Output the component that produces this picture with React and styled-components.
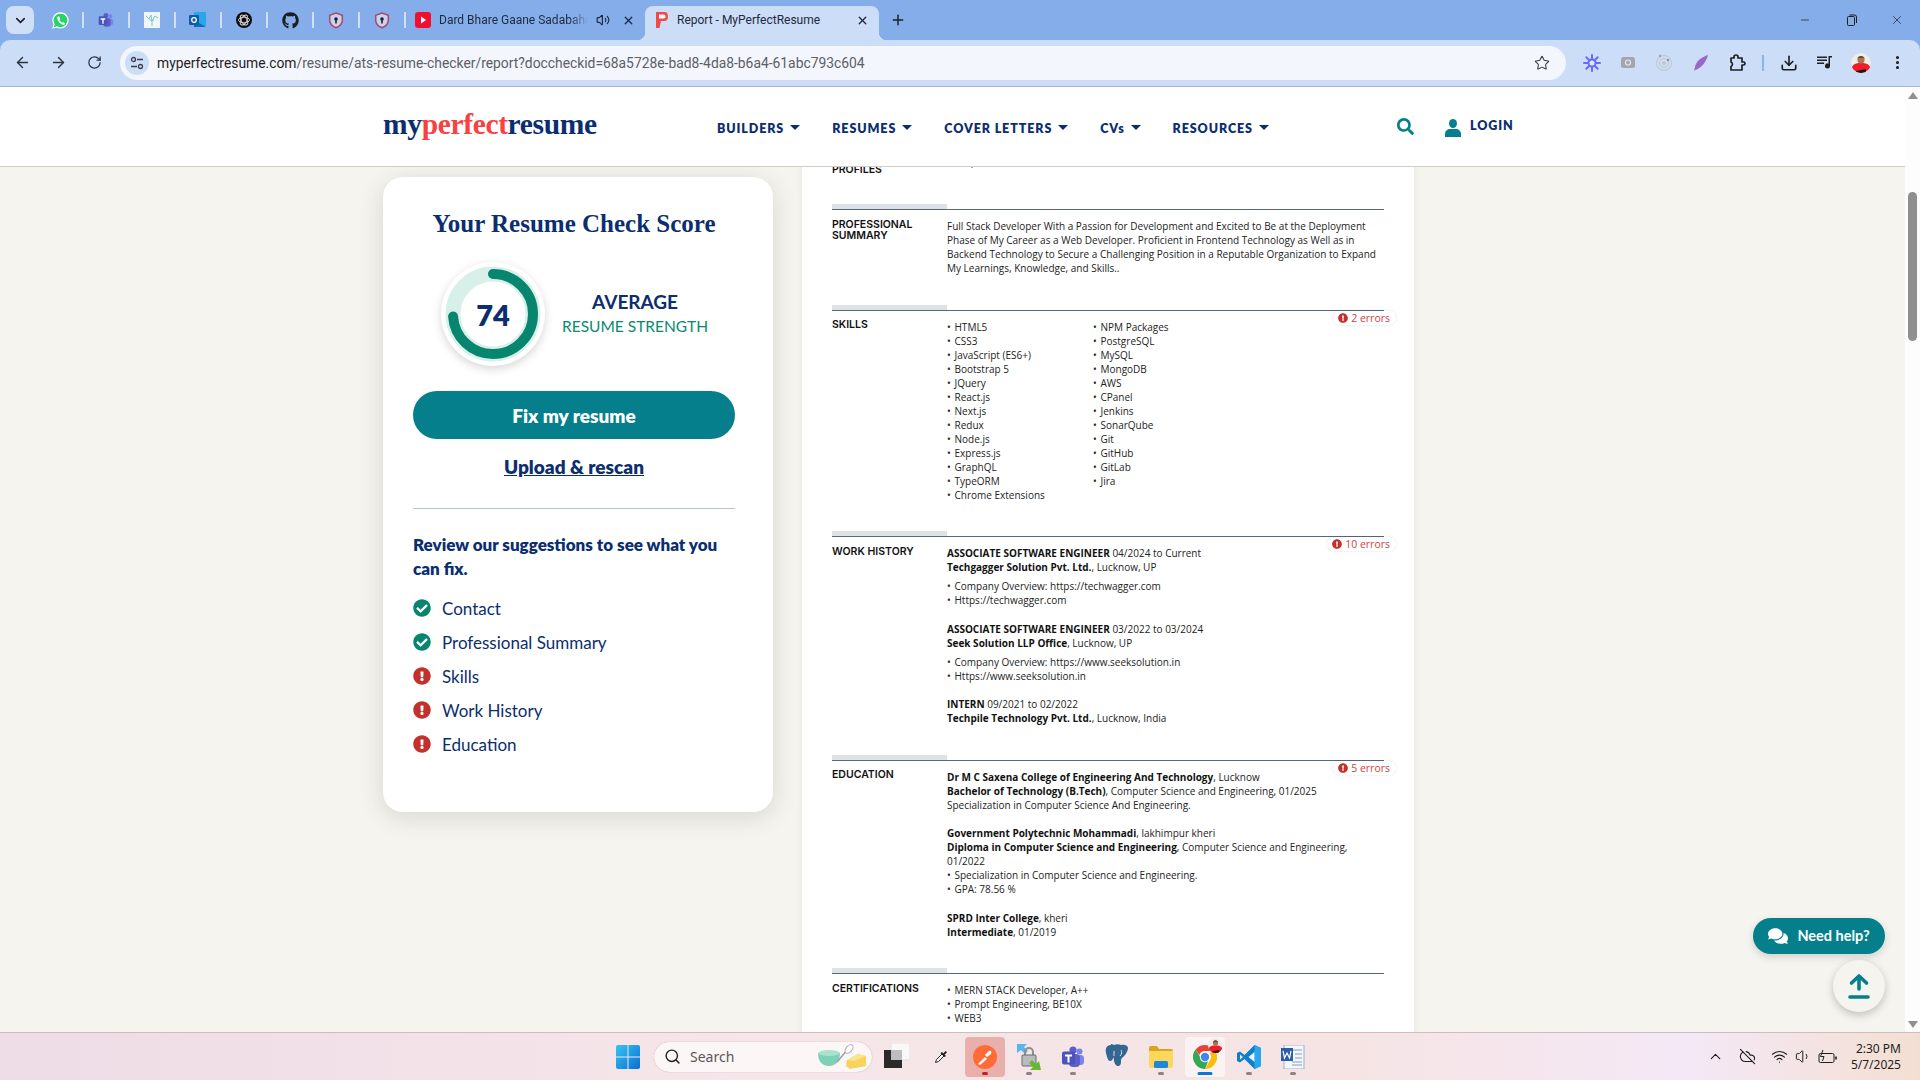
import React from 'react';
import styled, { createGlobalStyle } from 'styled-components';
import {
  ArrowLeft, ArrowRight, RotateCw, Star, MoreVertical, ChevronDown, ChevronUp,
  X, Plus, Minus, Volume2, CloudOff, Wifi, Volume1, Search, Download,
} from 'lucide-react';
import { FaCheckCircle, FaExclamationCircle, FaSearch, FaComments, FaGithub } from 'react-icons/fa';

const NAVY = '#0b2e6f';
const TEAL = '#047f8b';
const GREEN = '#08856e';
const RED = '#c4302b';

const GlobalStyle = createGlobalStyle`
  html, body { margin: 0; padding: 0; height: 100%; overflow: hidden; }
  * { box-sizing: border-box; }
  body { font-family: "Lato", "Liberation Sans", sans-serif; }
`;

const Screen = styled.div`
  width: 1920px;
  height: 1080px;
  display: flex;
  flex-direction: column;
  background: #84adea;
  overflow: hidden;
`;

/* ---------- browser chrome ---------- */
const TabStrip = styled.div`
  height: 40px;
  display: flex;
  align-items: flex-end;
  padding-left: 6px;
  flex: none;
`;

const TabMenu = styled.div`
  width: 28px;
  height: 28px;
  margin: 0 3px 6px 0;
  border-radius: 8px;
  background: #cfdff7;
  color: #1f1f1f;
  display: flex;
  align-items: center;
  justify-content: center;
`;

const PinnedTab = styled.div`
  width: 46px;
  height: 34px;
  padding-bottom: 6px;
  display: flex;
  align-items: center;
  justify-content: center;
  position: relative;
  &::after {
    content: '';
    position: absolute;
    right: -1px;
    top: 6px;
    width: 2px;
    height: 16px;
    background: #d0e0f8;
  }
`;

const Tab = styled.div`
  width: ${(p) => p.$width}px;
  height: 34px;
  display: flex;
  align-items: center;
  padding: 0 10px 6px;
  gap: 8px;
  position: relative;
  border-radius: 8px 8px 0 0;
  background: ${(p) => (p.$active ? '#cbddf7' : 'transparent')};
  color: #1f2a3c;
  font-family: "Roboto", "Noto Sans", sans-serif;
  font-size: 12px;
  ${(p) => p.$active && `
    &::before, &::after {
      content: '';
      position: absolute;
      bottom: 0;
      width: 8px;
      height: 8px;
    }
    &::before { left: -8px; background: radial-gradient(circle at 0 0, transparent 8px, #cbddf7 8.5px); }
    &::after { right: -8px; background: radial-gradient(circle at 100% 0, transparent 8px, #cbddf7 8.5px); }
  `}
`;

const TabTitle = styled.span`
  flex: 1;
  min-width: 0;
  white-space: nowrap;
  overflow: hidden;
  ${(p) => p.$fade && `
    -webkit-mask-image: linear-gradient(90deg, #000 88%, transparent);
    mask-image: linear-gradient(90deg, #000 88%, transparent);
  `}
`;

const NewTab = styled.div`
  width: 28px;
  height: 28px;
  margin: 0 0 6px 5px;
  display: flex;
  align-items: center;
  justify-content: center;
  color: #1f1f1f;
`;

const WindowControls = styled.div`
  margin-left: auto;
  height: 40px;
  display: flex;
`;

const WindowButton = styled.div`
  width: 46px;
  display: flex;
  align-items: center;
  justify-content: center;
  color: #1f1f1f;
`;

const Toolbar = styled.div`
  height: 47px;
  flex: none;
  display: flex;
  align-items: center;
  background: #cbddf7;
  border-radius: 10px 10px 0 0;
  border-bottom: 1px solid #a7b8d4;
  padding-bottom: 1px;
`;

const NavButton = styled.div`
  width: 36px;
  display: flex;
  justify-content: center;
  color: #2c3340;
  &:first-child { margin-left: 4px; }
`;

const Omnibox = styled.div`
  width: 1446px;
  height: 34px;
  margin-left: 8px;
  border-radius: 17px;
  background: #f3f6fc;
  display: flex;
  align-items: center;
  padding: 0 16px 0 5px;
  font-family: "Roboto", "Noto Sans", sans-serif;
  font-size: 13.85px;
  color: #1f1f1f;
`;

const SiteChip = styled.div`
  width: 24px;
  height: 24px;
  border-radius: 50%;
  background: #cbddf7;
  display: flex;
  align-items: center;
  justify-content: center;
  margin-right: 8px;
  flex: none;
`;

const UrlPath = styled.span`
  color: #5c6066;
`;

const ExtensionRow = styled.div`
  display: flex;
  align-items: center;
  margin-left: 8px;
`;

const ExtensionSlot = styled.div`
  width: 36.2px;
  display: flex;
  justify-content: center;
  align-items: center;
  color: #1f1f1f;
`;

const ToolbarDivider = styled.div`
  width: 2px;
  height: 16px;
  background: #8fb3e6;
  margin: 0 7px;
`;

/* ---------- page ---------- */
const Viewport = styled.div`
  flex: 1;
  min-height: 0;
  display: flex;
  position: relative;
  background: #fff;
`;

const PageColumn = styled.div`
  flex: 1;
  min-width: 0;
  display: flex;
  flex-direction: column;
  background: #f5f4ef;
`;

const SiteHeader = styled.header`
  height: 80px;
  flex: none;
  background: #fff;
  border-bottom: 1px solid #d2ccc4;
  display: flex;
  align-items: center;
  padding-left: 383px;
`;

const Logo = styled.div`
  width: 213px;
  font-family: "Liberation Serif", serif;
  font-weight: 700;
  font-size: 29.5px;
  letter-spacing: -0.35px;
  color: ${NAVY};
  margin-top: -4px;
  white-space: nowrap;
  span { color: #f9423f; }
`;

const NavMenu = styled.nav`
  display: flex;
  gap: 32px;
  margin: 3px 0 0 121px;
`;

const NavItem = styled.div`
  display: flex;
  align-items: center;
  gap: 6px;
  font-size: 12.5px;
  font-weight: 800;
  letter-spacing: 0.9px;
  color: ${NAVY};
  white-space: nowrap;
  &::after {
    content: '';
    width: 0;
    height: 0;
    border-left: 5px solid transparent;
    border-right: 5px solid transparent;
    border-top: 5px solid ${NAVY};
    margin-top: -2px;
  }
`;

const SearchButton = styled.div`
  margin-left: 128px;
  color: ${TEAL};
  display: flex;
`;

const LoginLink = styled.div`
  margin-left: 30px;
  display: flex;
  align-items: center;
  gap: 8px;
  font-size: 12.5px;
  font-weight: 800;
  letter-spacing: 0.9px;
  color: ${NAVY};
  svg { margin-top: 2px; }
  span { margin-top: -3px; }
`;

const PageBody = styled.div`
  flex: 1;
  min-height: 0;
  overflow: hidden;
  display: flex;
  align-items: flex-start;
  padding-left: 383px;
  gap: 29px;
`;

const ScoreCard = styled.aside`
  width: 390px;
  flex: none;
  margin-top: 10px;
  padding: 31px 38px 51px 30px;
  background: #fff;
  border-radius: 20px;
  box-shadow: 0 5px 24px rgba(70, 65, 45, 0.16);
`;

const CardTitle = styled.h2`
  margin: 0;
  text-align: center;
  font-family: "Liberation Serif", serif;
  font-weight: 700;
  font-size: 25px;
  line-height: 32px;
  color: ${NAVY};
`;

const ScoreRow = styled.div`
  display: flex;
  align-items: center;
  gap: 17px;
  margin: 22px 0 25px 28px;
`;

const Gauge = styled.div`
  width: 104px;
  height: 104px;
  border-radius: 50%;
  background: #fff;
  box-shadow: 0 3px 10px rgba(0, 0, 0, 0.16);
  display: grid;
  place-items: center;
  svg, span { grid-area: 1 / 1; }
`;

const GaugeValue = styled.span`
  font-size: 29px;
  font-weight: 800;
  color: ${NAVY};
`;

const ScoreLabel = styled.div`
  display: flex;
  flex-direction: column;
  align-items: center;
  white-space: nowrap;
`;

const ScoreWord = styled.div`
  font-size: 19px;
  line-height: 24px;
  font-weight: 700;
  color: ${NAVY};
`;

const ScoreCaption = styled.div`
  font-size: 15.5px;
  line-height: 24px;
  color: #0a8a6e;
`;

const FixButton = styled.button`
  display: block;
  width: 100%;
  height: 48px;
  border: none;
  border-radius: 24px;
  background: ${TEAL};
  color: #fff;
  font-family: inherit;
  font-size: 19px;
  font-weight: 800;
`;

const UploadLink = styled.a`
  display: block;
  margin-top: 16px;
  text-align: center;
  font-size: 19px;
  line-height: 24px;
  font-weight: 800;
  color: ${NAVY};
  text-decoration: underline;
`;

const CardDivider = styled.hr`
  margin: 29px 0 24px;
  border: none;
  border-top: 1px solid #b9c2d3;
`;

const ReviewText = styled.p`
  margin: 0 0 10px;
  font-size: 17px;
  line-height: 24px;
  font-weight: 800;
  color: ${NAVY};
`;

const CheckRow = styled.div`
  height: 34px;
  display: flex;
  align-items: center;
  gap: 11px;
  font-size: 17px;
  color: ${NAVY};
  svg { color: ${(p) => (p.$ok ? GREEN : RED)}; flex: none; }
`;

const Paper = styled.main`
  width: 612px;
  flex: none;
  margin-top: -14.5px;
  padding: 0 30px;
  background: #fff;
  box-shadow: 0 0 6px rgba(70, 65, 45, 0.08);
  font-family: "Open Sans", "Noto Sans", sans-serif;
  font-size: 10px;
  line-height: 14px;
  color: #222;
`;

const Section = styled.section`
  position: relative;
`;

const SectionRule = styled.div`
  height: 6px;
  border-bottom: 1px solid #56697b;
  background: linear-gradient(#dde2e6, #dde2e6) left top / 115px 5px no-repeat;
`;

const SectionBody = styled.div`
  display: grid;
  grid-template-columns: 115px 1fr;
  padding: ${(p) => (p.$bare ? 0 : 8.5)}px 0 29.5px;
`;

const SectionName = styled.h3`
  margin: 0;
  font-family: "Inter", "Lato", sans-serif;
  font-size: 10.5px;
  line-height: 11px;
  font-weight: 600;
  color: #111;
  padding-right: 20px;
`;

const SectionContent = styled.div`
  padding-top: 0.5px;
  min-width: 0;
`;

const ClippedValue = styled.div`
  padding-top: 3px;
`;

const ErrorBadge = styled.div`
  position: absolute;
  top: 6px;
  right: -12px;
  height: 14px;
  padding: 0 6px 0 5px;
  display: flex;
  align-items: center;
  gap: 3px;
  background: #fff;
  border-radius: 7px;
  box-shadow: 0 0 3px rgba(0, 0, 0, 0.12);
  color: #c9453f;
  font-size: 10.5px;
  svg { color: ${RED}; }
`;

const SkillColumns = styled.div`
  display: grid;
  grid-template-columns: 146px 1fr;
`;

const BulletLine = styled.div`
  padding-left: 7.5px;
  position: relative;
  &::before {
    content: '•';
    position: absolute;
    left: 0;
  }
`;

const Entry = styled.div`
  & + & { margin-top: 14.6px; }
`;

const EntryBullets = styled.div`
  margin-top: ${(p) => p.$gap || 0}px;
`;

const Strong = styled.b`
  font-weight: 700;
  color: #111;
`;

const Scrollbar = styled.div`
  width: 15px;
  flex: none;
  background: #fdfdfd;
  display: flex;
  flex-direction: column;
  align-items: center;
  padding: 5px 0 4px;
`;

const ScrollArrow = styled.div`
  width: 0;
  height: 0;
  border-left: 5px solid transparent;
  border-right: 5px solid transparent;
  ${(p) => (p.$down
    ? 'border-top: 7px solid #8f8f8f; margin-top: auto;'
    : 'border-bottom: 7px solid #8f8f8f;')}
`;

const ScrollThumb = styled.div`
  width: 9px;
  height: 149px;
  margin-top: 93px;
  border-radius: 5px;
  background: #8f8f8f;
`;

const HelpButton = styled.div`
  position: absolute;
  right: 35px;
  top: 831px;
  width: 132px;
  height: 36px;
  padding-bottom: 1px;
  border-radius: 18px;
  background: ${TEAL};
  color: #fff;
  display: flex;
  align-items: center;
  justify-content: center;
  gap: 9px;
  font-size: 14.5px;
  font-weight: 700;
  box-shadow: 0 3px 8px rgba(0, 0, 0, 0.15);
`;

const TopButton = styled.div`
  position: absolute;
  right: 35px;
  top: 873px;
  width: 52px;
  height: 52px;
  border-radius: 50%;
  background: #f5f4ef;
  box-shadow: 0 3px 8px rgba(0, 0, 0, 0.22);
  display: flex;
  align-items: center;
  justify-content: center;
`;

/* ---------- taskbar ---------- */
const Taskbar = styled.footer`
  height: 48px;
  flex: none;
  display: flex;
  align-items: center;
  padding-left: 606px;
  border-top: 1px solid #c9bfc0;
  background: linear-gradient(90deg, #eedce6 0%, #f6e6e9 40%, #f6e4e4 70%, #f4e8f6 88%, #f3dfd2 100%);
`;

const StartButton = styled.div`
  width: 44px;
  display: flex;
  justify-content: center;
`;

const SearchPill = styled.div`
  width: 218px;
  height: 30px;
  margin: 0 3px 0 4px;
  border-radius: 15px;
  background: #fcf6f6;
  box-shadow: 0 0 1px rgba(0, 0, 0, 0.35);
  display: flex;
  align-items: center;
  gap: 9px;
  padding: 0 4px 0 10px;
  font-family: "Noto Sans", "Open Sans", sans-serif;
  font-size: 14px;
  color: #5a5658;
  svg:last-child { margin-left: auto; }
`;

const AppSlot = styled.div`
  width: 44px;
  height: 40px;
  padding: 0 2px;
`;

const AppButton = styled.div`
  height: 40px;
  border-radius: 4px;
  background: ${(p) => p.$bg || 'transparent'};
  display: flex;
  align-items: center;
  justify-content: center;
  position: relative;
  &::after {
    content: '';
    display: ${(p) => (p.$dot ? 'block' : 'none')};
    position: absolute;
    bottom: 2px;
    left: 50%;
    transform: translateX(-50%);
    width: ${(p) => (p.$dot === 'wide' ? 15 : 6)}px;
    height: 3px;
    border-radius: 2px;
    background: ${(p) => p.$dotColor || '#8a8486'};
  }
`;

const ChromeAvatar = styled.div`
  position: absolute;
  top: 1px;
  right: 2px;
  display: flex;
`;

const Tray = styled.div`
  margin-left: auto;
  display: flex;
  align-items: center;
  padding-right: 19px;
  color: #1f1f1f;
`;

const TraySlot = styled.div`
  width: 24px;
  display: flex;
  justify-content: center;
  margin-right: ${(p) => p.$gap || 0}px;
`;

const Clock = styled.div`
  margin-left: 11px;
  text-align: right;
  font-family: "Noto Sans", "Open Sans", sans-serif;
  font-size: 12px;
  line-height: 16px;
`;

/* ---------- small drawings ---------- */
const WhatsappIcon = () => (
  <svg width="17" height="17" viewBox="0 0 17 17">
    <path d="M8.500.8a7.500 7.500 0 0 0-6.400 11.400L1 16l3.900-1.100A7.500 7.500 0 1 0 8.500.8z" fill="#25d366" stroke="#fff" strokeWidth="1.200" />
    <path d="M6 4.500c-.9.600-1.100 2 0 4s3 3.800 5 4.200c1 .2 1.900-.5 2.200-1.300l-2-1.400-1 .8c-1-.4-2.300-1.800-2.800-2.800l.8-1-1-2.500z" fill="#fff" />
  </svg>
);

const TeamsIcon = ({ size = 16 }) => (
  <svg width={size} height={size} viewBox="0 0 24 24">
    <circle cx="18.5" cy="6.5" r="3" fill="#7b83eb" />
    <rect x="14" y="10" width="9" height="10" rx="3.5" fill="#7b83eb" />
    <circle cx="12" cy="5" r="3.6" fill="#5b5fc7" />
    <rect x="8" y="9" width="11" height="13" rx="4" fill="#5b5fc7" />
    <rect x="1" y="6.5" width="13" height="13" rx="2" fill="#4b53bc" />
    <path d="M4 9.5h7v2H8.5v6h-2v-6H4z" fill="#fff" />
  </svg>
);

const ShieldIcon = () => (
  <svg width="16" height="17" viewBox="0 0 16 17">
    <path d="M8 1l6.300 2.200v5c0 3.600-2.700 6.200-6.300 7.600C4.400 14.400 1.700 11.800 1.700 8.200v-5z" fill="#c9d3ea" stroke="#a8496e" strokeWidth="1.500" />
    <circle cx="8" cy="7" r="1.800" fill="#2b1d33" />
    <rect x="7.200" y="7.500" width="1.600" height="4" fill="#2b1d33" />
  </svg>
);

const OutlookIcon = () => (
  <svg width="18" height="18" viewBox="0 0 18 18">
    <path d="M5 1h12v14H5z" fill="#28a8ea" />
    <path d="M5 9l12 7H5z" fill="#0f6cbd" />
    <rect x="0" y="4" width="10" height="10" rx="1" fill="#0f5ca8" />
    <circle cx="5" cy="9" r="2.300" fill="none" stroke="#fff" strokeWidth="1.300" />
  </svg>
);

const ImageFavicon = () => (
  <svg width="16" height="16" viewBox="0 0 16 16">
    <rect width="16" height="16" fill="#f1f6f7" />
    <path d="M2 4l3 3 2-4 1 6 3-5 3 2M8 9v5M5 6l2 3 3-1" fill="none" stroke="#7cc5d2" strokeWidth="1" />
  </svg>
);

const OpenAiIcon = () => (
  <svg width="16" height="16" viewBox="0 0 16 16">
    <circle cx="8" cy="8" r="8" fill="#0d0d0d" />
    <g fill="none" stroke="#d8d8d8" strokeWidth="0.900">
      <ellipse cx="8" cy="8" rx="5.500" ry="2.800" />
      <ellipse cx="8" cy="8" rx="5.500" ry="2.800" transform="rotate(60 8 8)" />
      <ellipse cx="8" cy="8" rx="5.500" ry="2.800" transform="rotate(120 8 8)" />
    </g>
    <circle cx="8" cy="8" r="1.500" fill="#0d0d0d" />
  </svg>
);

const YoutubeIcon = () => (
  <svg width="16" height="16" viewBox="0 0 16 16">
    <rect width="16" height="16" rx="3" fill="#f00f2f" />
    <path d="M6 4.500l5 3.500-5 3.500z" fill="#fff" />
  </svg>
);

const ResumeFavicon = () => (
  <svg width="14" height="18" viewBox="0 0 14 18">
    <path d="M1 1h8.500C12 1 13 3 13 5.500S12 10 9.500 10H6l-1.500 7H1z" fill="#f04a48" />
    <path d="M4 3.500h4.500C10 3.500 10.500 4.500 10.500 5.500S10 7.500 8.500 7.500H4z" fill="#fff" />
  </svg>
);

const TuneIcon = () => (
  <svg width="14" height="14" viewBox="0 0 14 14" fill="none" stroke="#3a3f47" strokeWidth="1.300">
    <circle cx="3.500" cy="3.500" r="2" />
    <path d="M7 3.500h6M1 10.500h6" />
    <circle cx="10.500" cy="10.500" r="2" />
  </svg>
);

const BurstIcon = () => (
  <svg width="18" height="18" viewBox="0 0 18 18" stroke="#6a6cf5" strokeWidth="2" strokeLinecap="round">
    <path d="M9 1v16M1 9h16M3.300 3.300l11.400 11.400M14.700 3.300L3.300 14.700" />
    <circle cx="9" cy="9" r="3.500" fill="#dfe4ff" />
  </svg>
);

const CameraChip = () => (
  <svg width="14" height="11" viewBox="0 0 14 11">
    <rect width="14" height="11" rx="2.500" fill="#a3a7ad" />
    <circle cx="7" cy="5.500" r="2.500" fill="none" stroke="#e6e9ee" strokeWidth="1.200" />
  </svg>
);

const RadarIcon = () => (
  <svg width="18" height="18" viewBox="0 0 18 18" fill="none" stroke="#c2c8d0">
    <circle cx="9" cy="9" r="7.500" />
    <circle cx="9" cy="9" r="4.500" />
    <circle cx="9" cy="9" r="1.500" fill="#d9c9a8" />
    <circle cx="13" cy="6" r="1.200" fill="#8b8f96" stroke="none" />
    <circle cx="5" cy="2" r="1.200" fill="#9a9ea5" stroke="none" />
  </svg>
);

const FeatherIcon = () => (
  <svg width="16" height="18" viewBox="0 0 16 18">
    <path d="M15 1C9 3 3 7 2 13l-1 4 1-1C7 15 13 9 15 1z" fill="#9a66c8" />
  </svg>
);

const PuzzleIcon = () => (
  <svg width="18" height="18" viewBox="0 0 18 18" fill="none" stroke="#1f1f1f" strokeWidth="1.700" strokeLinejoin="round">
    <path d="M3 4h3V3a2 2 0 0 1 4 0v1h4v4h1.500a1.500 1.500 0 0 1 0 3H14v5H3v-3.500a2.500 2.500 0 0 0 0-4.500z" />
  </svg>
);

const MediaIcon = () => (
  <svg width="16" height="15" viewBox="0 0 16 15" fill="#1f1f1f">
    <rect x="0" y="1.500" width="10" height="1.500" />
    <rect x="0" y="4.500" width="10" height="1.500" />
    <rect x="0" y="7.500" width="7" height="1.500" />
    <path d="M11.500 1h3.500v1.600h-2V11a2.500 2.500 0 1 1-1.500-2.300z" />
  </svg>
);

const AvatarIcon = ({ size = 20 }) => (
  <svg width={size} height={size} viewBox="0 0 20 20">
    <clipPath id={`avatar-${size}`}><circle cx="10" cy="10" r="10" /></clipPath>
    <g clipPath={`url(#avatar-${size})`}>
      <rect width="20" height="20" fill="#f2ece6" />
      <path d="M0 20c0-8 3-10 10-10s10 2 10 10z" fill="#f01c28" />
      <circle cx="10" cy="6.800" r="3.600" fill="#a9744f" />
      <path d="M6.500 5.500c0-3 7-3 7 0l-1-1h-5z" fill="#2a2320" />
      <path d="M5 18l10-2v4H5z" fill="#241515" />
    </g>
  </svg>
);

const UserGlyph = () => (
  <svg width="18" height="18" viewBox="0 0 18 18" fill={TEAL}>
    <ellipse cx="9" cy="4.500" rx="4" ry="4.500" />
    <path d="M1 18v-3c0-3 2.500-5 5-5h6c2.500 0 5 2 5 5v3z" />
  </svg>
);

const UpIcon = () => (
  <svg width="22" height="26" viewBox="0 0 22 26" fill="none" stroke={TEAL} strokeWidth="3.600" strokeLinecap="round" strokeLinejoin="round">
    <path d="M11 16V3M3.500 10L11 3l7.500 7" />
    <path d="M2 24h18" />
  </svg>
);

const WindowsLogo = () => (
  <svg width="24" height="24" viewBox="0 0 24 24">
    <defs>
      <linearGradient id="win" x1="0" y1="0" x2="1" y2="1">
        <stop offset="0" stopColor="#35c4f4" />
        <stop offset="1" stopColor="#0a6fd0" />
      </linearGradient>
    </defs>
    <path d="M2 0h9.500v11.500H0V2a2 2 0 0 1 2-2zM12.500 0H22a2 2 0 0 1 2 2v9.500H12.500zM0 12.500h11.500V24H2a2 2 0 0 1-2-2zM12.500 12.500H24V22a2 2 0 0 1-2 2h-9.500z" fill="url(#win)" />
  </svg>
);

const DoodleIcon = () => (
  <svg width="52" height="26" viewBox="0 0 52 26">
    <path d="M2 9h22c0 8-4 13-11 13S2 17 2 9z" fill="#7ed0b6" />
    <ellipse cx="13" cy="9" rx="11" ry="3" fill="#a9e3d0" />
    <path d="M21 18L32 5" stroke="#9aa0a6" strokeWidth="1.500" />
    <ellipse cx="33" cy="5" rx="3" ry="5" fill="#fff" stroke="#a8adb2" transform="rotate(40 33 5)" />
    <path d="M31 16l11-6 8 2v10l-16 3-4-3z" fill="#f7d35c" />
    <path d="M31 16l11-6 8 2-12 5z" fill="#fbe48d" />
  </svg>
);

const StackSquares = () => (
  <svg width="26" height="28" viewBox="0 0 26 28">
    <rect x="7" y="0" width="19" height="17" fill="#f8f8f8" />
    <rect x="7" y="0" width="19" height="17" fill="none" stroke="#e3dfe0" />
    <rect x="0" y="7" width="18" height="18" fill="#2a2a2a" />
    <rect x="7" y="7" width="11" height="10" fill="#bdbdbd" />
  </svg>
);

const DropperIcon = () => (
  <svg width="14" height="15" viewBox="0 0 14 15">
    <path d="M1.500 13.500l1-3L8 5l2 2-5.500 5.500z" fill="#f4f4f4" stroke="#2a2a2a" />
    <path d="M8 3l1.500 1.500L11 2.500c1-.8 2.300.6 1.500 1.500L10.500 5.500 12 7l-1.500 1L6.500 4z" fill="#1c1c1c" />
  </svg>
);

const PostmanIcon = () => (
  <svg width="24" height="24" viewBox="0 0 24 24">
    <circle cx="12" cy="12" r="12" fill="#ff6c37" />
    <path d="M5 19l7-7 2 2-7 6zM12 10l4-4c2-1 3 1 2 3l-4 3z" fill="#fff" />
  </svg>
);

const LockArrowsIcon = () => (
  <svg width="26" height="28" viewBox="0 0 26 28">
    <path d="M1 1h10L8 4l4 4-3 3-4-4-4 3z" fill="#58b5ee" />
    <path d="M9 12V9a4 4 0 0 1 8 0v3" fill="none" stroke="#8d8d8d" strokeWidth="2" />
    <rect x="6" y="12" width="14" height="11" rx="1" fill="#b9bcbf" stroke="#6a6a6a" />
    <path d="M25 27H14l3-3-4-4 3-3 4 4 3-3z" fill="#66b82e" />
  </svg>
);

const PostgresIcon = () => (
  <svg width="24" height="26" viewBox="0 0 24 26" fill="#336791">
    <path d="M6 1c-4 0-6 3-5 8 1 4 2 8 4 8s3-2 3.500-4c.5 3 .5 8 4 9 2 .5 3.500-1 3.500-4 0-2 0-3 1-4 3-2 6-7 6-10 0-2-3-4-7-3-2-1-5-1-7 0-1-.5-2-1-3-1z" />
    <path d="M9 7v5M16 6c1 2 1 4-1 6" stroke="#cfe0ee" fill="none" />
  </svg>
);

const FolderIcon = () => (
  <svg width="24" height="22" viewBox="0 0 24 22">
    <path d="M0 2a2 2 0 0 1 2-2h6l2 3h12a2 2 0 0 1 2 2v3H0z" fill="#d9a520" />
    <path d="M0 5h24v15a2 2 0 0 1-2 2H2a2 2 0 0 1-2-2z" fill="#fbd75b" />
    <rect x="5" y="15" width="14" height="7" rx="1.500" fill="#1c88d6" />
  </svg>
);

const ChromeIcon = () => (
  <svg width="24" height="24" viewBox="0 0 24 24">
    <path d="M12 0a12 12 0 0 1 10.400 6H12a6 6 0 0 0-5.700 4L2.800 4.300A12 12 0 0 1 12 0z" fill="#ea4335" />
    <path d="M22.400 6A12 12 0 0 1 12 24l5.200-9A6 6 0 0 0 16.500 8z" fill="#fbbc04" />
    <path d="M12 24A12 12 0 0 1 2.800 4.300L7.700 13a6 6 0 0 0 7.500 3z" fill="#34a853" />
    <circle cx="12" cy="12" r="5.200" fill="#fff" />
    <circle cx="12" cy="12" r="4.200" fill="#4285f4" />
  </svg>
);

const VsCodeIcon = () => (
  <svg width="24" height="24" viewBox="0 0 24 24">
    <path d="M17.500 0L24 3v18l-6.500 3-10-10-4.500 3.500L0 16V8l3-1.500L7.500 10z" fill="#0f7ecb" />
    <path d="M17.500 0L24 3v18l-6.500 3z" fill="#27a7ee" />
    <path d="M17.500 7l-6 5 6 5z" fill="#eaf3fb" />
    <path d="M3 9.500L6 12l-3 2.500z" fill="#eaf3fb" />
  </svg>
);

const WordIcon = () => (
  <svg width="24" height="24" viewBox="0 0 24 24">
    <rect x="3" y="0" width="20" height="24" fill="#f4f7fb" stroke="#9cb1cf" />
    <path d="M11 5h10M14 9h7M14 13h7M11 17h10M11 20h10" stroke="#7f9dc7" />
    <rect x="0" y="3" width="12" height="13" fill="#2b5eaa" />
    <path d="M2 6l1.500 7L6 8l2.500 5L10 6" fill="none" stroke="#fff" strokeWidth="1.200" />
  </svg>
);

const BatteryIcon = () => (
  <svg width="20" height="16" viewBox="0 0 20 16" fill="none" stroke="#1f1f1f" strokeWidth="1">
    <rect x="1" y="4.500" width="15" height="9" rx="1.500" />
    <path d="M18 7.500v3" strokeWidth="1.600" />
    <path d="M5 1L2.500 7.500H6L4.500 12" fill="none" />
  </svg>
);

/* ---------- data ---------- */
const pinnedTabs = [
  <WhatsappIcon key="wa" />,
  <TeamsIcon key="teams" />,
  <ImageFavicon key="img" />,
  <OutlookIcon key="out" />,
  <OpenAiIcon key="ai" />,
  <FaGithub key="gh" size={17} color="#1b1f23" />,
  <ShieldIcon key="s1" />,
  <ShieldIcon key="s2" />,
];

const navItems = ['BUILDERS', 'RESUMES', 'COVER LETTERS', 'CVs', 'RESOURCES'];

const checks = [
  ['Contact', true],
  ['Professional Summary', true],
  ['Skills', false],
  ['Work History', false],
  ['Education', false],
];

const skillsLeft = ['HTML5', 'CSS3', 'JavaScript (ES6+)', 'Bootstrap 5', 'JQuery', 'React.js', 'Next.js', 'Redux', 'Node.js', 'Express.js', 'GraphQL', 'TypeORM', 'Chrome Extensions'];
const skillsRight = ['NPM Packages', 'PostgreSQL', 'MySQL', 'MongoDB', 'AWS', 'CPanel', 'Jenkins', 'SonarQube', 'Git', 'GitHub', 'GitLab', 'Jira'];

const taskApps = [
  { icon: <StackSquares /> },
  { icon: <DropperIcon /> },
  { icon: <PostmanIcon />, bg: '#e9b0ab', dot: true, dotColor: '#c8201c' },
  { icon: <LockArrowsIcon />, dot: true },
  { icon: <TeamsIcon size={24} />, dot: true },
  { icon: <PostgresIcon /> },
  { icon: <FolderIcon />, dot: true },
  { icon: <ChromeIcon />, bg: '#fbf3f3', dot: 'wide', dotColor: '#0a78d4', avatar: true },
  { icon: <VsCodeIcon />, dot: true },
  { icon: <WordIcon />, dot: true },
];

const Badge = ({ count }) => (
  <ErrorBadge>
    <FaExclamationCircle size={10} />
    {count} errors
  </ErrorBadge>
);

const ResumeSection = ({ name, bare, errors, children }) => (
  <Section>
    {!bare && <SectionRule />}
    {errors && <Badge count={errors} />}
    <SectionBody $bare={bare}>
      <SectionName>{name}</SectionName>
      <SectionContent>{children}</SectionContent>
    </SectionBody>
  </Section>
);

const App = () => {
  return (
    <Screen>
      <GlobalStyle />
      <TabStrip>
        <TabMenu><ChevronDown size={15} strokeWidth={2.5} /></TabMenu>
        {pinnedTabs.map((icon, i) => <PinnedTab key={i}>{icon}</PinnedTab>)}
        <Tab $width={240}>
          <YoutubeIcon />
          <TabTitle $fade>Dard Bhare Gaane Sadabahar Hindi Songs</TabTitle>
          <Volume2 size={14} strokeWidth={2} />
          <X size={13} strokeWidth={2.5} style={{ marginLeft: 4 }} />
        </Tab>
        <Tab $width={234} $active>
          <ResumeFavicon />
          <TabTitle>Report - MyPerfectResume</TabTitle>
          <X size={13} strokeWidth={2.5} />
        </Tab>
        <NewTab><Plus size={16} strokeWidth={2.2} /></NewTab>
        <WindowControls>
          <WindowButton><Minus size={12} strokeWidth={1.5} /></WindowButton>
          <WindowButton>
            <svg width="11" height="12" viewBox="0 0 11 12" fill="none" stroke="#1f1f1f">
              <rect x="1.500" y="2.500" width="7" height="9" rx="1" />
              <path d="M3.500 1h5a2 2 0 0 1 2 2v6" />
            </svg>
          </WindowButton>
          <WindowButton><X size={14} strokeWidth={1.2} /></WindowButton>
        </WindowControls>
      </TabStrip>

      <Toolbar>
        <NavButton><ArrowLeft size={17} strokeWidth={2} /></NavButton>
        <NavButton><ArrowRight size={17} strokeWidth={2} /></NavButton>
        <NavButton><RotateCw size={15} strokeWidth={2} /></NavButton>
        <Omnibox>
          <SiteChip><TuneIcon /></SiteChip>
          <span>myperfectresume.com<UrlPath>/resume/ats-resume-checker/report?doccheckid=68a5728e-bad8-4da8-b6a4-61abc793c604</UrlPath></span>
          <Star size={16} strokeWidth={1.6} color="#3a3f47" style={{ marginLeft: 'auto' }} />
        </Omnibox>
        <ExtensionRow>
          <ExtensionSlot><BurstIcon /></ExtensionSlot>
          <ExtensionSlot><CameraChip /></ExtensionSlot>
          <ExtensionSlot><RadarIcon /></ExtensionSlot>
          <ExtensionSlot><FeatherIcon /></ExtensionSlot>
          <ExtensionSlot><PuzzleIcon /></ExtensionSlot>
          <ToolbarDivider />
          <ExtensionSlot><Download size={18} strokeWidth={2.2} /></ExtensionSlot>
          <ExtensionSlot><MediaIcon /></ExtensionSlot>
          <ExtensionSlot><AvatarIcon /></ExtensionSlot>
          <ExtensionSlot><MoreVertical size={17} strokeWidth={2.4} /></ExtensionSlot>
        </ExtensionRow>
      </Toolbar>

      <Viewport>
        <PageColumn>
          <SiteHeader>
            <Logo>my<span>perfect</span>resume</Logo>
            <NavMenu>
              {navItems.map((item) => <NavItem key={item}>{item}</NavItem>)}
            </NavMenu>
            <SearchButton><FaSearch size={17} /></SearchButton>
            <LoginLink><UserGlyph /><span>LOGIN</span></LoginLink>
          </SiteHeader>

          <PageBody>
            <ScoreCard>
              <CardTitle>Your Resume Check Score</CardTitle>
              <ScoreRow>
                <Gauge>
                  <svg width="96" height="96" viewBox="0 0 96 96">
                    <circle cx="48" cy="48" r="40" fill="none" stroke="#d8f0ea" strokeWidth="15" />
                    <circle
                      cx="48"
                      cy="48"
                      r="40"
                      fill="none"
                      stroke={GREEN}
                      strokeWidth="10"
                      strokeLinecap="round"
                      pathLength="100"
                      strokeDasharray="74 100"
                      transform="rotate(-90 48 48)"
                    />
                  </svg>
                  <GaugeValue>74</GaugeValue>
                </Gauge>
                <ScoreLabel>
                  <ScoreWord>AVERAGE</ScoreWord>
                  <ScoreCaption>RESUME STRENGTH</ScoreCaption>
                </ScoreLabel>
              </ScoreRow>
              <FixButton>Fix my resume</FixButton>
              <UploadLink>Upload &amp; rescan</UploadLink>
              <CardDivider />
              <ReviewText>Review our suggestions to see what you can fix.</ReviewText>
              {checks.map(([label, ok]) => (
                <CheckRow key={label} $ok={ok}>
                  {ok ? <FaCheckCircle size={18} /> : <FaExclamationCircle size={18} />}
                  {label}
                </CheckRow>
              ))}
            </ScoreCard>

            <Paper>
              <ResumeSection bare name="PORTFOLIOS, PROFILES">
                <ClippedValue>Links,</ClippedValue>
              </ResumeSection>
              <ResumeSection name="PROFESSIONAL SUMMARY">
                Full Stack Developer With a Passion for Development and Excited to Be at the Deployment Phase of My Career as a Web Developer. Proficient in Frontend Technology as Well as in Backend Technology to Secure a Challenging Position in a Reputable Organization to Expand My Learnings, Knowledge, and Skills..
              </ResumeSection>
              <ResumeSection name="SKILLS" errors={2}>
                <SkillColumns>
                  <div>{skillsLeft.map((s) => <BulletLine key={s}>{s}</BulletLine>)}</div>
                  <div>{skillsRight.map((s) => <BulletLine key={s}>{s}</BulletLine>)}</div>
                </SkillColumns>
              </ResumeSection>
              <ResumeSection name="WORK HISTORY" errors={10}>
                <Entry>
                  <div><Strong>ASSOCIATE SOFTWARE ENGINEER</Strong> 04/2024 to Current</div>
                  <div><Strong>Techgagger Solution Pvt. Ltd.</Strong>, Lucknow, UP</div>
                  <EntryBullets $gap={5}>
                    <BulletLine>Company Overview: https://techwagger.com</BulletLine>
                    <BulletLine>Https://techwagger.com</BulletLine>
                  </EntryBullets>
                </Entry>
                <Entry>
                  <div><Strong>ASSOCIATE SOFTWARE ENGINEER</Strong> 03/2022 to 03/2024</div>
                  <div><Strong>Seek Solution LLP Office</Strong>, Lucknow, UP</div>
                  <EntryBullets $gap={5}>
                    <BulletLine>Company Overview: https://www.seeksolution.in</BulletLine>
                    <BulletLine>Https://www.seeksolution.in</BulletLine>
                  </EntryBullets>
                </Entry>
                <Entry>
                  <div><Strong>INTERN</Strong> 09/2021 to 02/2022</div>
                  <div><Strong>Techpile Technology Pvt. Ltd.</Strong>, Lucknow, India</div>
                </Entry>
              </ResumeSection>
              <ResumeSection name="EDUCATION" errors={5}>
                <Entry>
                  <div><Strong>Dr M C Saxena College of Engineering And Technology</Strong>, Lucknow</div>
                  <div><Strong>Bachelor of Technology (B.Tech)</Strong>, Computer Science and Engineering, 01/2025</div>
                  <div>Specialization in Computer Science And Engineering.</div>
                </Entry>
                <Entry>
                  <div><Strong>Government Polytechnic Mohammadi</Strong>, lakhimpur kheri</div>
                  <div><Strong>Diploma in Computer Science and Engineering</Strong>, Computer Science and Engineering, 01/2022</div>
                  <BulletLine>Specialization in Computer Science and Engineering.</BulletLine>
                  <BulletLine>GPA: 78.56 %</BulletLine>
                </Entry>
                <Entry>
                  <div><Strong>SPRD Inter College</Strong>, kheri</div>
                  <div><Strong>Intermediate</Strong>, 01/2019</div>
                </Entry>
              </ResumeSection>
              <ResumeSection name="CERTIFICATIONS">
                <BulletLine>MERN STACK Developer, A++</BulletLine>
                <BulletLine>Prompt Engineering, BE10X</BulletLine>
                <BulletLine>WEB3</BulletLine>
              </ResumeSection>
            </Paper>
          </PageBody>
        </PageColumn>

        <Scrollbar>
          <ScrollArrow />
          <ScrollThumb />
          <ScrollArrow $down />
        </Scrollbar>

        <HelpButton><FaComments size={20} />Need help?</HelpButton>
        <TopButton><UpIcon /></TopButton>
      </Viewport>

      <Taskbar>
        <StartButton><WindowsLogo /></StartButton>
        <SearchPill>
          <Search size={17} strokeWidth={2} color="#222" />
          <span>Search</span>
          <DoodleIcon />
        </SearchPill>
        {taskApps.map((app, i) => (
          <AppSlot key={i}>
            <AppButton $bg={app.bg} $dot={app.dot} $dotColor={app.dotColor}>
              {app.icon}
              {app.avatar && <ChromeAvatar><AvatarIcon size={15} /></ChromeAvatar>}
            </AppButton>
          </AppSlot>
        ))}
        <Tray>
          <TraySlot $gap={8}><ChevronUp size={17} strokeWidth={1.6} /></TraySlot>
          <TraySlot $gap={8}><CloudOff size={17} strokeWidth={1.6} /></TraySlot>
          <TraySlot><Wifi size={17} strokeWidth={1.6} /></TraySlot>
          <TraySlot><Volume1 size={17} strokeWidth={1.4} /></TraySlot>
          <TraySlot><BatteryIcon /></TraySlot>
          <Clock>2:30 PM<br />5/7/2025</Clock>
        </Tray>
      </Taskbar>
    </Screen>
  );
};

export default App;
